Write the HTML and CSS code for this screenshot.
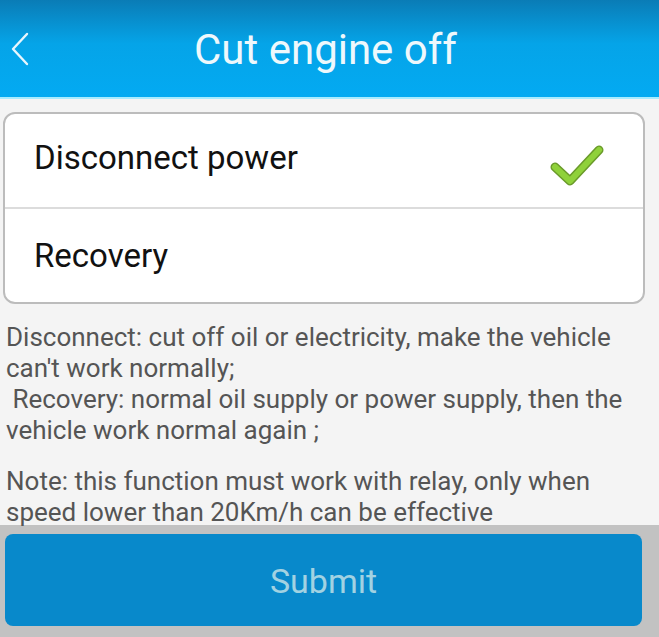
FILE: index.html
```html
<!DOCTYPE html>
<html>
  <head>
    <meta charset="utf-8">
    <meta name="viewport" content="width=device-width, initial-scale=1">
    <title>Cut engine off</title>
    <link rel="stylesheet" href="styles.css">
  </head>
  <body>
    <div class="header">
      <span class="back">
        <svg width="20" height="34" viewBox="0 0 20 34">
          <path d="M17 2 L3 17 L17 32" fill="none" stroke="#e8f6fd" stroke-width="2.4" stroke-linecap="round" stroke-linejoin="round"/>
        </svg>
      </span>
      <div class="title">Cut engine off</div>
    </div>

    <div class="content">
      <div class="card">
        <div class="option">
          Disconnect power
          <svg class="check" width="56" height="44" viewBox="0 0 56 44">
            <path d="M6 24 L21 38 L50 7" fill="none" stroke="#6a9a2a" stroke-width="9" stroke-linecap="round" stroke-linejoin="round"/>
            <path d="M6 24 L21 38 L50 7" fill="none" stroke="#8fd13a" stroke-width="6" stroke-linecap="round" stroke-linejoin="round"/>
          </svg>
        </div>
        <div class="option">Recovery</div>
      </div>

      <p class="desc">Disconnect: cut off oil or electricity, make the vehicle can't work normally;<br>&nbsp;Recovery: normal oil supply or power supply, then the vehicle work normal again ;</p>
      <p class="desc note">Note: this function must work with relay, only when speed lower than 20Km/h can be effective</p>
    </div>

    <div class="footer">
      <div class="submit">Submit</div>
    </div>
  </body>
</html>
```

FILE: styles.css
```css
body {
  margin: 0;
  width: 659px;
  height: 637px;
  background: #f4f4f4;
  font-family: Roboto, "Liberation Sans", sans-serif;
  overflow: hidden;
}
.header {
  height: 97px;
  background: linear-gradient(#0a7cb6, #05a4e8 45%, #03aaf2);
  border-bottom: 2px solid #a8ecff;
  display: flex;
  align-items: center;
  position: relative;
}
.back {
  position: absolute;
  left: 10px;
  top: 32px;
}
.title {
  flex: 1;
  text-align: center;
  color: #eef8fc;
  font-size: 42px;
  padding-right: 8px;
  margin-top: 2px;
}
.content {
  height: 426px;
  padding-top: 13px;
  box-sizing: border-box;
}
.card {
  margin: 0 14px 0 3px;
  background: #fff;
  border: 2px solid #bcbcbc;
  border-radius: 12px;
}
.option {
  height: 93px;
  display: flex;
  align-items: center;
  justify-content: space-between;
  padding: 0 38px 0 29px;
  font-size: 33px;
  color: #111;
}
.option:first-child {
  border-bottom: 2px solid #dcdcdc;
  padding-bottom: 6px;
  height: 87px;
}
.check {
  margin-top: 14px;
}
.desc {
  margin: 18px 10px 0 6px;
  font-size: 26px;
  line-height: 31px;
  color: #555;
}
.note {
  margin-top: 20px;
}
.footer {
  background: #c2c2c2;
  height: 112px;
  padding: 9px 17px 0 5px;
  box-sizing: border-box;
}
.submit {
  height: 92px;
  background: #0889cb;
  border-radius: 8px;
  color: #a2d2e2;
  font-size: 34px;
  padding-top: 2px;
  box-sizing: border-box;
  display: flex;
  align-items: center;
  justify-content: center;
}
```
